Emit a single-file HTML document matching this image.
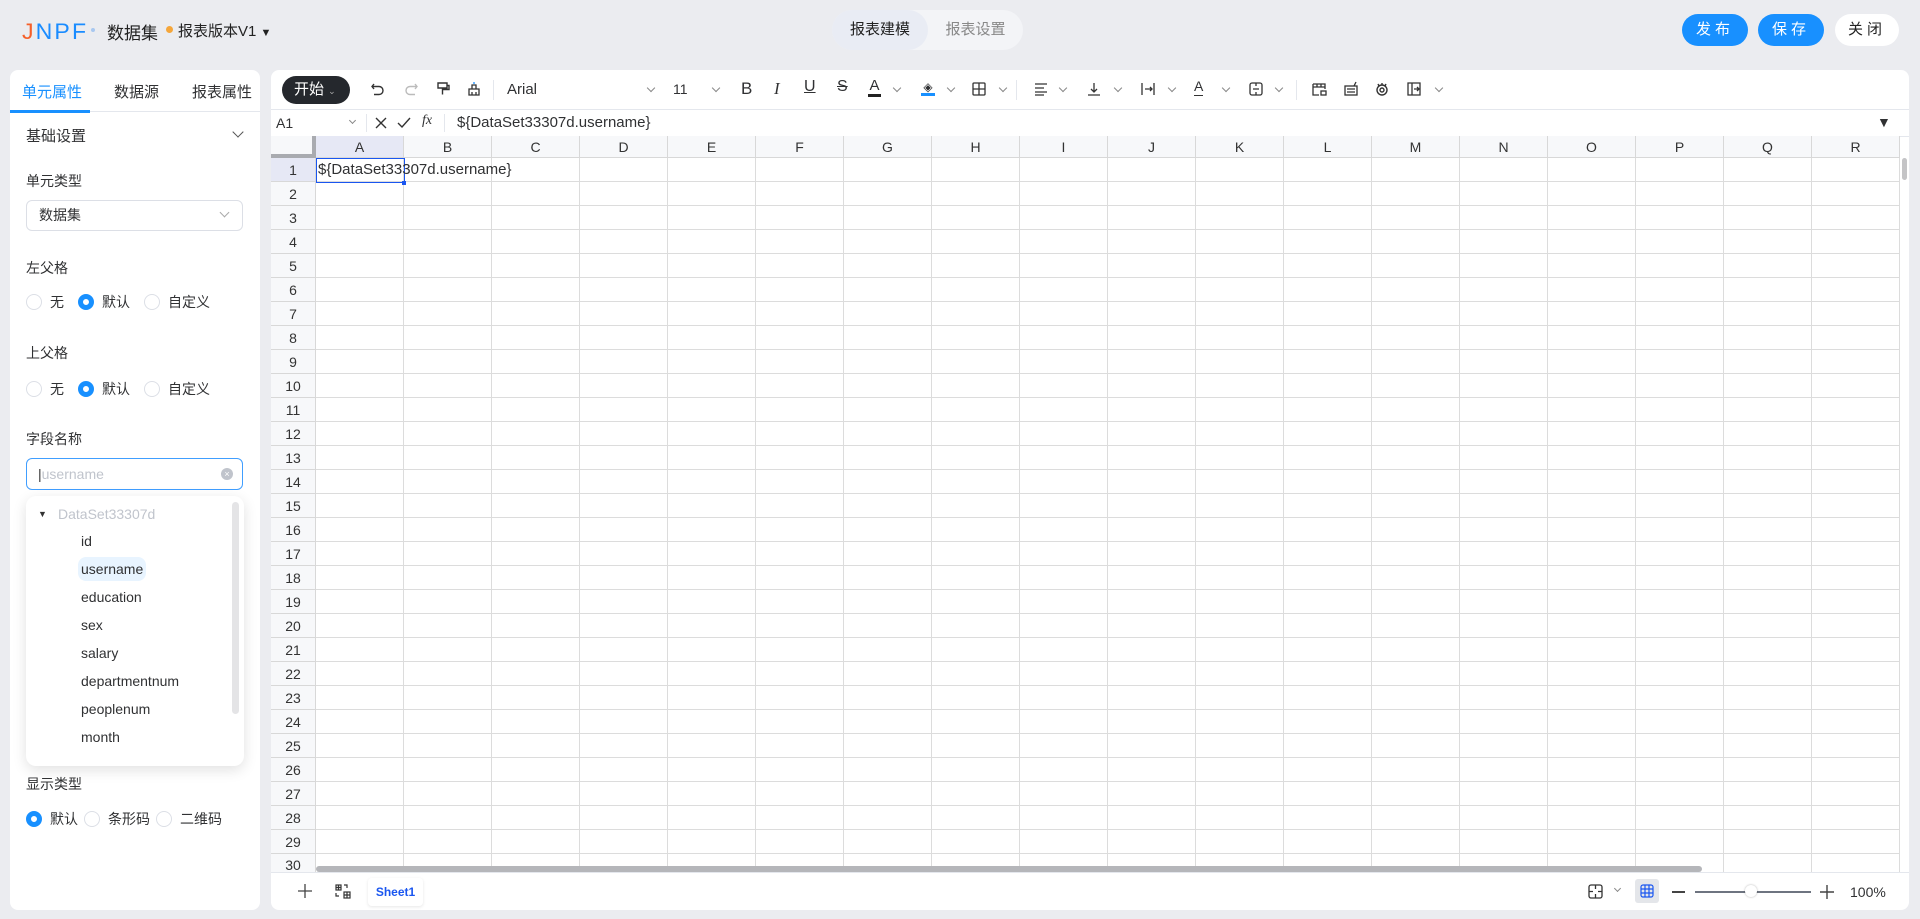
<!DOCTYPE html>
<html><head><meta charset="utf-8"><style>
*{box-sizing:border-box;margin:0;padding:0}
body{width:1920px;height:919px;background:#ebecf0;font-family:"Liberation Sans","Noto Sans CJK SC",sans-serif;color:#303133;position:relative;overflow:hidden;font-size:14px}
.abs{position:absolute}
.logo{left:22px;top:19px;font-size:22px;font-weight:normal;letter-spacing:2px;color:#1a8cff;transform:scaleX(1.05);transform-origin:left}
.tabs{left:832px;top:10px;width:191px;height:40px;border-radius:20px;background:#f3f4f7}
.tabs .on{position:absolute;left:0;top:0;width:96px;height:40px;border-radius:20px;background:#e9ecf4;text-align:center;line-height:40px;font-size:15px;color:#222}
.tabs .off{position:absolute;left:96px;top:0;width:95px;text-align:center;line-height:40px;font-size:15px;color:#888}
.btn{top:14px;height:32px;border-radius:16px;line-height:32px;text-align:center;font-size:15px;letter-spacing:4px;color:#fff;background:#1890ff;width:66px}
.panel{background:#fff;border-radius:8px}
.lbl{font-size:14px;color:#303133}
.radio{display:inline-block;width:16px;height:16px;border:1px solid #dcdfe6;border-radius:50%;vertical-align:middle;margin-right:8px}
.radio.on{border:5px solid #1890ff}
.rg{font-size:14px;left:26px}
.rg span.t{vertical-align:middle;margin-right:14px}
.chev{position:absolute;top:85px;width:6px;height:6px;border-right:1px solid #888;border-bottom:1px solid #888;transform:rotate(45deg)}
.colh{position:absolute;top:136px;height:22px;left:316px;display:flex;background:#f7f8fa;border-bottom:1px solid #d8d8d8}
.colh div{width:88px;border-right:1px solid #d8d8d8;text-align:center;line-height:22px;font-size:14px;color:#333}
.rowh{position:absolute;left:271px;top:158px;width:45px;background:#f7f8fa;border-right:1px solid #d8d8d8}
.rowh div{height:24px;border-bottom:1px solid #d8d8d8;text-align:center;line-height:24px;font-size:14px;color:#333}
.grid{position:absolute;left:316px;top:158px;width:1584px;height:714px;background-image:linear-gradient(to right,#dcdcdc 1px,transparent 1px),linear-gradient(to bottom,#dcdcdc 1px,transparent 1px);background-size:88px 24px;background-position:-1px -1px}
.dd div{position:absolute;left:55px;font-size:14px;color:#303133;line-height:24px}
</style></head><body>
<div class="abs logo"><span style="color:#f5602a">J</span>NPF</div>
<div class="abs" style="left:91px;top:28px;width:4px;height:4px;border-radius:50%;background:#a8c8f0"></div>
<div class="abs" style="left:107px;top:19px;font-size:17px;color:#222">数据集</div>
<div class="abs" style="left:166px;top:26px;width:7px;height:7px;border-radius:50%;background:#f5a63a"></div>
<div class="abs" style="left:178px;top:20px;font-size:15px;color:#222">报表版本V1 <span style="font-size:11px">▼</span></div>
<div class="abs tabs"><div class="on">报表建模</div><div class="off">报表设置</div></div>
<div class="abs btn" style="left:1682px">发布</div>
<div class="abs btn" style="left:1758px">保存</div>
<div class="abs btn" style="left:1835px;width:64px;background:#fff;color:#222">关闭</div>

<!-- left panel -->
<div class="abs panel" style="left:10px;top:70px;width:250px;height:840px">
 <div class="abs" style="left:0;top:41px;width:250px;height:1px;background:#e4e7ed"></div>
 <div class="abs" style="left:0;top:40px;width:80px;height:3px;background:#1890ff"></div>
 <div class="abs" style="left:12px;top:11px;font-size:15px;color:#1890ff">单元属性</div>
 <div class="abs" style="left:104px;top:11px;font-size:15px">数据源</div>
 <div class="abs" style="left:182px;top:11px;font-size:15px">报表属性</div>
 <div class="abs lbl" style="left:16px;top:55px;font-size:15px">基础设置</div>
 <div class="abs" style="left:224px;top:58px;width:8px;height:8px;border-right:1.5px solid #555;border-bottom:1.5px solid #555;transform:rotate(45deg)"></div>
</div>
<div class="abs lbl" style="left:26px;top:171px">单元类型</div>
<div class="abs" style="left:26px;top:200px;width:217px;height:31px;border:1px solid #dcdfe6;border-radius:6px;padding-left:12px;line-height:29px;font-size:14px">数据集</div>
<div class="abs" style="left:221px;top:209px;width:7px;height:7px;border-right:1px solid #aaa;border-bottom:1px solid #aaa;transform:rotate(45deg)"></div>
<div class="abs lbl" style="left:26px;top:258px">左父格</div>
<div class="abs rg" style="top:292px"><span class="radio"></span><span class="t">无</span><span class="radio on"></span><span class="t">默认</span><span class="radio"></span><span class="t">自定义</span></div>
<div class="abs lbl" style="left:26px;top:343px">上父格</div>
<div class="abs rg" style="top:379px"><span class="radio"></span><span class="t">无</span><span class="radio on"></span><span class="t">默认</span><span class="radio"></span><span class="t">自定义</span></div>
<div class="abs lbl" style="left:26px;top:429px">字段名称</div>
<div class="abs" style="left:26px;top:458px;width:217px;height:32px;border:1px solid #409eff;border-radius:6px;padding-left:11px;line-height:30px;font-size:14px;color:#c0c4cc"><span style="color:#333">|</span>username</div>
<div class="abs" style="left:221px;top:468px;width:12px;height:12px;border-radius:50%;background:#c0c4cc;color:#fff;font-size:9px;line-height:12px;text-align:center">×</div>
<div class="abs dd" style="left:26px;top:496px;width:218px;height:270px;background:#fff;border-radius:10px;box-shadow:0 4px 14px rgba(0,0,0,.12)">
 <div style="left:12px;top:6px;font-size:9px;color:#333">▼</div>
 <div style="left:32px;top:6px;color:#c0c4cc">DataSet33307d</div>
 <div style="top:33px">id</div>
 <div style="left:52px;top:61px;background:#e8f4ff;border-radius:8px;padding:0 3px;height:24px">username</div>
 <div style="top:89px">education</div>
 <div style="top:117px">sex</div>
 <div style="top:145px">salary</div>
 <div style="top:173px">departmentnum</div>
 <div style="top:201px">peoplenum</div>
 <div style="top:229px">month</div>
 <div style="left:206px;top:6px;width:7px;height:212px;border-radius:4px;background:#e4e4e6"></div>
</div>
<div class="abs lbl" style="left:26px;top:774px">显示类型</div>
<div class="abs rg" style="top:809px"><span class="radio on"></span><span class="t" style="margin-right:6px">默认</span><span class="radio"></span><span class="t" style="margin-right:6px">条形码</span><span class="radio"></span><span class="t">二维码</span></div>

<!-- main panel -->
<div class="abs panel" style="left:271px;top:70px;width:1638px;height:840px"></div>
<div class="abs" style="left:271px;top:109px;width:1638px;height:1px;background:#e4e7ed"></div>
<div class="abs" style="left:282px;top:76px;width:68px;height:28px;border-radius:14px;background:#25282d;color:#fff;font-size:15px;line-height:28px;padding-left:12px">开始 <span style="font-size:9px;color:#aaa">⌄</span></div>
<svg class="abs" style="left:370px;top:81px" width="16" height="16" viewBox="0 0 16 16" fill="none" stroke="#333" stroke-width="1.4"><path d="M4 3 2 5.5 4 8M2 5.5h7a4 4 0 010 8H4"/></svg>
<svg class="abs" style="left:403px;top:81px" width="16" height="16" viewBox="0 0 16 16" fill="none" stroke="#bbb" stroke-width="1.4"><path d="M12 3l2 2.5-2 2.5M14 5.5H7a4 4 0 000 8h5"/></svg>
<svg class="abs" style="left:435px;top:81px" width="16" height="16" viewBox="0 0 16 16" fill="none" stroke="#333" stroke-width="1.4"><path d="M3 2h9v5H3zM12 4.5h2v4H7.5v5"/></svg>
<svg class="abs" style="left:466px;top:81px" width="16" height="16" viewBox="0 0 16 16" fill="none" stroke="#333" stroke-width="1.3"><path d="M3 8h10v6H3zM6 8V4h4v4M6 14v-3M10 14v-3"/><path d="M7 2h2" stroke="#1890ff"/></svg>
<div class="abs" style="left:493px;top:80px;width:1px;height:20px;background:#e4e7ed"></div>
<div class="abs" style="left:507px;top:81px;font-size:15px">Arial</div>
<div class="chev" style="left:648px"></div>
<div class="abs" style="left:673px;top:81px;font-size:14px">11</div>
<div class="chev" style="left:713px"></div>
<div class="abs" style="left:741px;top:79px;font-size:17px">B</div>
<div class="abs" style="left:774px;top:79px;font-size:17px;font-family:'Liberation Serif',serif;font-style:italic">I</div>
<div class="abs" style="left:804px;top:78px;font-size:16px;text-decoration:underline">U</div>
<div class="abs" style="left:837px;top:78px;font-size:16px;text-decoration:line-through">S</div>
<div class="abs" style="left:868px;top:77px;font-size:15px;border-bottom:3px solid #222;line-height:17px;width:13px;text-align:center">A</div>
<div class="chev" style="left:894px"></div>
<div class="abs" style="left:921px;top:80px;width:14px;height:16px;border-bottom:3px solid #1890ff;font-size:12px;text-align:center">◈</div>
<div class="chev" style="left:948px"></div>
<svg class="abs" style="left:971px;top:81px" width="16" height="16" viewBox="0 0 16 16" fill="none" stroke="#333" stroke-width="1.3"><rect x="2" y="2" width="12" height="12" rx="1"/><path d="M8 2v12M2 8h12"/></svg>
<div class="chev" style="left:1000px"></div>
<div class="abs" style="left:1016px;top:80px;width:1px;height:20px;background:#e4e7ed"></div>
<svg class="abs" style="left:1033px;top:81px" width="16" height="16" viewBox="0 0 16 16" stroke="#333" stroke-width="1.3"><path d="M2 3h12M2 7h9M2 11h12M2 14h9"/></svg>
<div class="chev" style="left:1060px"></div>
<svg class="abs" style="left:1086px;top:81px" width="16" height="16" viewBox="0 0 16 16" fill="none" stroke="#333" stroke-width="1.3"><path d="M8 2v9M5 8l3 3 3-3M2 14h12"/></svg>
<div class="chev" style="left:1115px"></div>
<svg class="abs" style="left:1140px;top:81px" width="16" height="16" viewBox="0 0 16 16" fill="none" stroke="#333" stroke-width="1.3"><path d="M2 2v12M14 2v12M5 8h7M10 6l2 2-2 2"/></svg>
<div class="chev" style="left:1169px"></div>
<div class="abs" style="left:1194px;top:78px;font-size:14px;border-bottom:1.5px solid #333;line-height:17px">A</div>
<div class="chev" style="left:1223px"></div>
<svg class="abs" style="left:1248px;top:81px" width="16" height="16" viewBox="0 0 16 16" fill="none" stroke="#333" stroke-width="1.3"><rect x="2" y="2" width="12" height="12" rx="2"/><path d="M5 8h6M8 2v3M8 11v3"/></svg>
<div class="chev" style="left:1276px"></div>
<div class="abs" style="left:1296px;top:80px;width:1px;height:20px;background:#e4e7ed"></div>
<svg class="abs" style="left:1311px;top:81px" width="17" height="16" viewBox="0 0 17 16" fill="none" stroke="#333" stroke-width="1.3"><path d="M2 3h12v5M2 3v11h6M2 6h12M6 3v3M10 3v3"/><rect x="10" y="10" width="5" height="4"/></svg>
<svg class="abs" style="left:1343px;top:81px" width="16" height="16" viewBox="0 0 16 16" fill="none" stroke="#333" stroke-width="1.3"><rect x="2" y="5" width="12" height="9"/><path d="M4 8h8M4 11h8M11 5l2-4"/></svg>
<svg class="abs" style="left:1374px;top:81px" width="16" height="16" viewBox="0 0 16 16" fill="none" stroke="#333" stroke-width="1.4"><circle cx="8" cy="9" r="5"/><circle cx="8" cy="9" r="2"/><path d="M4 3l1 2M12 3l-1 2M8 2v2"/></svg>
<svg class="abs" style="left:1406px;top:81px" width="16" height="16" viewBox="0 0 16 16" fill="none" stroke="#333" stroke-width="1.3"><path d="M2 2h12v12H2zM6 2v12M8 8h5M11 6l2 2-2 2"/></svg>
<div class="chev" style="left:1436px"></div>

<!-- formula bar -->
<div class="abs" style="left:276px;top:115px;font-size:14px">A1</div>
<div class="chev" style="left:350px;top:118px;width:5px;height:5px"></div>
<div class="abs" style="left:366px;top:114px;width:1px;height:18px;background:#e4e7ed"></div>
<svg class="abs" style="left:374px;top:116px" width="14" height="14" viewBox="0 0 14 14" stroke="#333" stroke-width="1.4"><path d="M2 2l10 10M12 2 2 12"/></svg>
<svg class="abs" style="left:397px;top:116px" width="14" height="14" viewBox="0 0 14 14" fill="none" stroke="#333" stroke-width="1.4"><path d="M1 7l4 4 8-9"/></svg>
<div class="abs" style="left:422px;top:113px;font-size:14px;font-style:italic;font-family:'Liberation Serif',serif">fx</div>
<div class="abs" style="left:444px;top:114px;width:1px;height:18px;background:#e4e7ed"></div>
<div class="abs" style="left:457px;top:114px;font-size:15px">${DataSet33307d.username}</div>
<div class="abs" style="left:1877px;top:114px;font-size:14px">▼</div>
<div class="abs" style="left:271px;top:136px;width:1638px;height:1px;background:#e4e7ed"></div>

<!-- sheet -->
<div class="colh"><div style="background:#e6e8f5">A</div><div>B</div><div>C</div><div>D</div><div>E</div><div>F</div><div>G</div><div>H</div><div>I</div><div>J</div><div>K</div><div>L</div><div>M</div><div>N</div><div>O</div><div>P</div><div>Q</div><div>R</div></div>
<div class="abs" style="left:271px;top:136px;width:45px;height:22px;background:#f7f8fa;border-bottom:1px solid #d8d8d8"></div>
<div class="abs" style="left:312px;top:136px;width:4px;height:22px;background:#a9abb0"></div>
<div class="abs" style="left:271px;top:154px;width:45px;height:4px;background:#a9abb0"></div>
<div class="grid"></div>
<div class="rowh"><div style="background:#e6e8f5">1</div><div>2</div><div>3</div><div>4</div><div>5</div><div>6</div><div>7</div><div>8</div><div>9</div><div>10</div><div>11</div><div>12</div><div>13</div><div>14</div><div>15</div><div>16</div><div>17</div><div>18</div><div>19</div><div>20</div><div>21</div><div>22</div><div>23</div><div>24</div><div>25</div><div>26</div><div>27</div><div>28</div><div>29</div><div style="height:18px;line-height:22px;border:0">30</div></div>
<div class="abs" style="left:316px;top:158px;width:89px;height:25px;border:1px solid #1a56f0"></div>
<div class="abs" style="left:402px;top:181px;width:4px;height:4px;background:#1a56f0"></div>
<div class="abs" style="left:318px;top:161px;font-size:15px">${DataSet33307d.username}</div>
<div class="abs" style="left:1902px;top:158px;width:7px;height:714px;background:#fff"></div>
<div class="abs" style="left:1902px;top:158px;width:5px;height:22px;border-radius:3px;background:#c4c4c6"></div>
<div class="abs" style="left:316px;top:866px;width:1386px;height:6px;border-radius:3px;background:#b5b6ba"></div>
<div class="abs" style="left:271px;top:872px;width:1638px;height:37px;background:#fff;border-radius:0 0 8px 8px;border-top:1px solid #e4e7ed"></div>

<!-- bottom -->
<svg class="abs" style="left:298px;top:884px" width="14" height="14" viewBox="0 0 14 14" stroke="#444" stroke-width="1.3"><path d="M7 0v14M0 7h14"/></svg>
<svg class="abs" style="left:335px;top:884px" width="16" height="15" viewBox="0 0 16 15" fill="none" stroke="#333" stroke-width="1.2"><rect x="1" y="1" width="5" height="5"/><path d="M1 3.5h5M3.5 1v5M9 1h3v3M1 9v3h3"/><rect x="9" y="8" width="6" height="6"/><path d="M9 11h6M12 8v6"/></svg>
<div class="abs" style="left:368px;top:878px;width:55px;height:28px;border-radius:4px;box-shadow:0 1px 3px rgba(0,0,0,.1);text-align:center;line-height:28px;font-size:12px;font-weight:bold;color:#1a56f0">Sheet1</div>
<svg class="abs" style="left:1588px;top:884px" width="15" height="15" viewBox="0 0 15 15" fill="none" stroke="#333" stroke-width="1.3"><rect x="1" y="1" width="13" height="13" rx="2"/><path d="M7.5 1v4M7.5 10v4M1 7.5h4M10 7.5h4"/></svg>
<div class="chev" style="left:1615px;top:886px;width:5px;height:5px"></div>
<div class="abs" style="left:1635px;top:879px;width:24px;height:24px;border-radius:3px;background:#e4e6ea"></div>
<svg class="abs" style="left:1640px;top:884px" width="14" height="14" viewBox="0 0 14 14" fill="none" stroke="#1a56f0" stroke-width="1.2"><rect x="1" y="1" width="12" height="12" rx="2"/><path d="M5 1v12M9 1v12M1 5h12M1 9h12"/></svg>
<div class="abs" style="left:1672px;top:891px;width:13px;height:1.5px;background:#444"></div>
<div class="abs" style="left:1695px;top:891px;width:116px;height:1.5px;background:#6e7480"></div>
<div class="abs" style="left:1745px;top:885px;width:12px;height:12px;border-radius:50%;background:#fff;box-shadow:0 0 2px rgba(0,0,0,.3)"></div>
<svg class="abs" style="left:1820px;top:885px" width="14" height="14" viewBox="0 0 14 14" stroke="#444" stroke-width="1.4"><path d="M7 0v14M0 7h14"/></svg>
<div class="abs" style="left:1850px;top:884px;font-size:14px">100%</div>
</body></html>
